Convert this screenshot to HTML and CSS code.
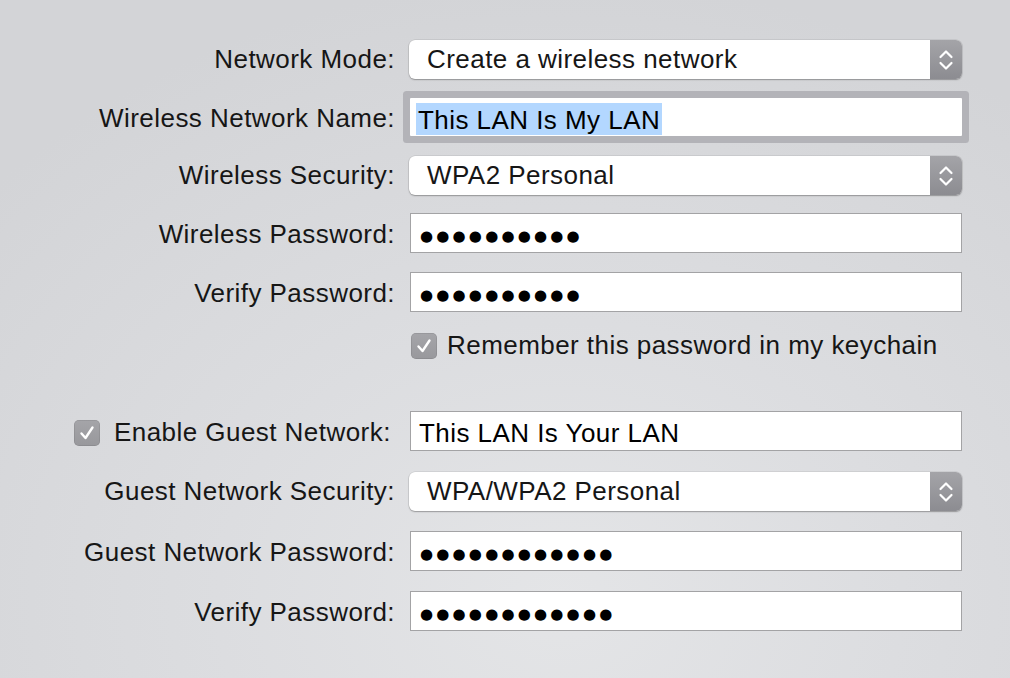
FILE: index.html
```html
<!DOCTYPE html>
<html>
<head>
<meta charset="utf-8">
<link rel="stylesheet" href="styles.css">
</head>
<body>
<div class="form">
  <div class="row h58">
    <div class="label">Network Mode:</div>
    <div class="popup"><span class="popup-text">Create a wireless network</span><span class="stepper"><svg width="32" height="39" viewBox="0 0 32 39"><path d="M10.5 17 L16 11.5 L21.5 17 M10.5 23 L16 28.5 L21.5 23" fill="none" stroke="#fff" stroke-width="2.2" stroke-linecap="round" stroke-linejoin="round"/></svg></span></div>
  </div>
  <div class="row h58">
    <div class="label fl">Wireless Network Name:</div>
    <div class="field focused"><span class="selected">This LAN Is My LAN</span></div>
  </div>
  <div class="row h58">
    <div class="label">Wireless Security:</div>
    <div class="popup"><span class="popup-text">WPA2 Personal</span><span class="stepper"><svg width="32" height="39" viewBox="0 0 32 39"><path d="M10.5 17 L16 11.5 L21.5 17 M10.5 23 L16 28.5 L21.5 23" fill="none" stroke="#fff" stroke-width="2.2" stroke-linecap="round" stroke-linejoin="round"/></svg></span></div>
  </div>
  <div class="row h58">
    <div class="label fl">Wireless Password:</div>
    <div class="field"><span class="dots">●●●●●●●●●●</span></div>
  </div>
  <div class="row h60">
    <div class="label fl">Verify Password:</div>
    <div class="field"><span class="dots">●●●●●●●●●●</span></div>
  </div>
  <div class="row h47">
    <div class="label"></div>
    <div class="check-line"><span class="checkbox"><svg width="26" height="26" viewBox="0 0 26 26"><path d="M7.5 13.5 L11.5 18 L18.5 7.5" fill="none" stroke="#fff" stroke-width="2.4" stroke-linecap="round" stroke-linejoin="round"/></svg></span><span class="check-text">Remember this password in my keychain</span></div>
  </div>
  <div class="spacer"></div>
  <div class="row h60">
    <div class="label guest-label"><span class="checkbox"><svg width="26" height="26" viewBox="0 0 26 26"><path d="M7.5 13.5 L11.5 18 L18.5 7.5" fill="none" stroke="#fff" stroke-width="2.4" stroke-linecap="round" stroke-linejoin="round"/></svg></span><span class="guest-text">Enable Guest Network:</span></div>
    <div class="field"><span class="plain">This LAN Is Your LAN</span></div>
  </div>
  <div class="row h60">
    <div class="label">Guest Network Security:</div>
    <div class="popup"><span class="popup-text">WPA/WPA2 Personal</span><span class="stepper"><svg width="32" height="39" viewBox="0 0 32 39"><path d="M10.5 17 L16 11.5 L21.5 17 M10.5 23 L16 28.5 L21.5 23" fill="none" stroke="#fff" stroke-width="2.2" stroke-linecap="round" stroke-linejoin="round"/></svg></span></div>
  </div>
  <div class="row h60">
    <div class="label fl">Guest Network Password:</div>
    <div class="field"><span class="dots">●●●●●●●●●●●●</span></div>
  </div>
  <div class="row h60">
    <div class="label fl">Verify Password:</div>
    <div class="field"><span class="dots">●●●●●●●●●●●●</span></div>
  </div>
</div>
</body>
</html>
```

FILE: styles.css
```css
html, body {
  margin: 0;
  padding: 0;
}
body {
  width: 1010px;
  height: 678px;
  overflow: hidden;
  background: radial-gradient(ellipse 760px 620px at 560px 600px, #e4e5e7 0%, #dcdde0 45%, #d3d4d7 100%);
  font-family: "Liberation Sans", Arial, sans-serif;
  font-size: 26px;
  color: #161616;
  letter-spacing: 0.45px;
}
.form {
  padding-top: 30px;
}
.row {
  display: grid;
  grid-template-columns: 395px 553px;
  column-gap: 14px;
  align-items: center;
}
.h58 { height: 58px; }
.h60 { height: 60px; }
.h47 { height: 47px; }
.spacer { height: 32px; }
.label {
  text-align: right;
  white-space: nowrap;
}
.label.fl {
  padding-top: 3px;
}
.popup {
  height: 39px;
  background: #fff;
  border-radius: 6px;
  display: flex;
  align-items: center;
  box-shadow: 0 0 0 0.5px rgba(0,0,0,0.12), 0 1px 1.5px rgba(0,0,0,0.28);
  overflow: hidden;
}
.popup-text {
  flex: 1;
  padding-left: 18px;
  white-space: nowrap;
}
.stepper {
  width: 32px;
  height: 39px;
  background: linear-gradient(#a4a4a8, #8c8c91);
  display: block;
}
.stepper svg { display: block; }
.field {
  margin-left: 1px;
  height: 40px;
  box-sizing: border-box;
  background: #fff;
  border: 1px solid #a3a3a5;
  display: flex;
  align-items: center;
  padding-left: 7px;
  color: #000;
  white-space: nowrap;
}
.field.focused {
  height: 38px;
  border: none;
  border-radius: 1px;
  padding-left: 6px;
  box-shadow: 0 0 0 7px #b3b3b8;
}
.selected {
  background: #b3d7ff;
  padding: 2px 2px 0;
  line-height: 30px;
  margin-top: 4px;
}
.plain {
  padding-left: 1px;
  padding-top: 5px;
}
.dots {
  font-family: "DejaVu Sans", sans-serif;
  font-size: 15px;
  letter-spacing: 3.2px;
  padding-left: 2px;
  padding-top: 5px;
  color: #000;
}
.check-line {
  display: flex;
  align-items: center;
  padding-left: 2px;
  white-space: nowrap;
}
.checkbox {
  width: 26px;
  height: 26px;
  border-radius: 5px;
  background: linear-gradient(#a5a5a9, #98989c);
  box-shadow: inset 0 0 0 0.5px rgba(0,0,0,0.15);
  display: inline-block;
  flex: none;
}
.checkbox svg { display: block; }
.check-text {
  margin-left: 10px;
}
.guest-label {
  display: flex;
  align-items: center;
  padding-left: 74px;
  padding-top: 3px;
}
.guest-text {
  margin-left: 14px;
}
```
